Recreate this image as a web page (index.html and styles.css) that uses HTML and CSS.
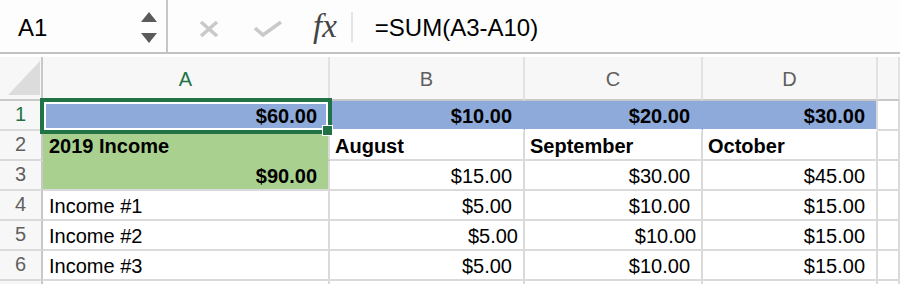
FILE: index.html
```html
<!DOCTYPE html>
<html lang="en">
<head>
    <meta charset="UTF-8">
    <title>Sheet</title>
    <link rel="stylesheet" href="styles.css">
</head>
<body>
    <div class="formula-bar">
        <div class="name-box">
            <span class="cell-ref">A1</span>
            <span class="spinner">
                <svg width="16" height="10" viewBox="0 0 16 10"><polygon points="8,0 16,10 0,10" fill="#5a5a5a"/></svg>
                <svg width="16" height="10" viewBox="0 0 16 10"><polygon points="0,0 16,0 8,10" fill="#5a5a5a"/></svg>
            </span>
        </div>
        <div class="tools">
            <svg class="icon-cancel" width="22" height="16" viewBox="0 0 22 16">
                <line x1="3" y1="1" x2="19" y2="15" stroke="#c9c9c9" stroke-width="3.5"/>
                <line x1="19" y1="1" x2="3" y2="15" stroke="#c9c9c9" stroke-width="3.5"/>
            </svg>
            <svg class="icon-enter" width="30" height="16" viewBox="0 0 30 16">
                <polyline points="2,7 10,14 28,1" fill="none" stroke="#c9c9c9" stroke-width="3.5"/>
            </svg>
            <span class="fx">fx</span>
            <span class="divider"></span>
        </div>
        <div class="formula-input">=SUM(A3-A10)</div>
    </div>

    <div class="sheet">
        <div class="corner"></div>
        <div class="col-hdr active">A</div>
        <div class="col-hdr">B</div>
        <div class="col-hdr">C</div>
        <div class="col-hdr">D</div>
        <div class="col-hdr"></div>

        <div class="row-hdr active">1</div>
        <div class="cell num bold blue">$60.00</div>
        <div class="cell num bold blue">$10.00</div>
        <div class="cell num bold blue">$20.00</div>
        <div class="cell num bold blue last">$30.00</div>
        <div class="cell"></div>

        <div class="row-hdr">2</div>
        <div class="cell bold green green-top">2019 Income</div>
        <div class="cell bold">August</div>
        <div class="cell bold">September</div>
        <div class="cell bold">October</div>
        <div class="cell"></div>

        <div class="row-hdr">3</div>
        <div class="cell num bold green">$90.00</div>
        <div class="cell num">$15.00</div>
        <div class="cell num">$30.00</div>
        <div class="cell num">$45.00</div>
        <div class="cell"></div>

        <div class="row-hdr">4</div>
        <div class="cell">Income #1</div>
        <div class="cell num">$5.00</div>
        <div class="cell num">$10.00</div>
        <div class="cell num">$15.00</div>
        <div class="cell"></div>

        <div class="row-hdr">5</div>
        <div class="cell">Income #2</div>
        <div class="cell num shift">$5.00</div>
        <div class="cell num shift">$10.00</div>
        <div class="cell num">$15.00</div>
        <div class="cell"></div>

        <div class="row-hdr">6</div>
        <div class="cell">Income #3</div>
        <div class="cell num">$5.00</div>
        <div class="cell num">$10.00</div>
        <div class="cell num">$15.00</div>
        <div class="cell"></div>

        <div class="row-hdr stub"></div>
        <div class="cell stub"></div>
        <div class="cell stub"></div>
        <div class="cell stub"></div>
        <div class="cell stub"></div>
        <div class="cell stub"></div>

        <div class="selection"><span class="handle"></span></div>
    </div>
</body>
</html>
```

FILE: styles.css
```css
body {
    margin: 0;
    width: 900px;
    height: 284px;
    overflow: hidden;
    font-family: "Liberation Sans", Arial, sans-serif;
    color: #000;
    background-color: #fff;
}
.formula-bar {
    display: flex;
    height: 52px;
    border-bottom: 2px solid #c2c2c2;
    background: #fdfdfd;
}
.name-box {
    box-sizing: border-box;
    width: 168px;
    padding: 0 9px 0 18px;
    border-right: 2px solid #c6c6c6;
    display: flex;
    align-items: center;
    justify-content: space-between;
}
.cell-ref {
    font-size: 24px;
    margin-top: 4px;
}
.spinner {
    display: flex;
    flex-direction: column;
    gap: 11px;
    margin-top: 2px;
}
.spinner svg {
    display: block;
}
.tools {
    display: flex;
    align-items: center;
    padding-left: 30px;
}
.icon-cancel {
    margin-top: 6px;
}
.icon-enter {
    margin-left: 33px;
    margin-top: 6px;
}
.fx {
    margin-left: 30px;
    font-family: "Liberation Serif", serif;
    font-style: italic;
    font-size: 33px;
    color: #444;
    margin-top: 1px;
}
.divider {
    width: 2px;
    height: 30px;
    margin-left: 14px;
    margin-top: 2px;
    background: #e4e4e4;
}
.formula-input {
    display: flex;
    align-items: center;
    padding-left: 22px;
    font-size: 24px;
    margin-top: 3px;
}
.sheet {
    position: relative;
    margin-top: 3px;
    display: grid;
    grid-template-columns: 43px 287px 195px 178px 175px 1fr;
    grid-template-rows: 44px repeat(6, 30px) 3px;
}
.corner {
    position: relative;
    background: #f7f7f7;
    border-right: 2px solid #c8c8c8;
    border-bottom: 2px solid #c8c8c8;
}
.corner::after {
    content: "";
    position: absolute;
    left: 8px;
    top: 4px;
    width: 32px;
    height: 34px;
    background: #dcdcdc;
    clip-path: polygon(100% 0, 100% 100%, 0 100%);
}
.col-hdr {
    box-sizing: border-box;
    background: #f7f7f7;
    border-right: 2px solid #e2e2e2;
    border-bottom: 2px solid #c8c8c8;
    display: flex;
    align-items: center;
    justify-content: center;
    font-size: 20px;
    color: #5f5f5f;
    padding-top: 2px;
}
.row-hdr {
    box-sizing: border-box;
    background: #f7f7f7;
    border-right: 2px solid #c8c8c8;
    border-bottom: 2px solid #dadada;
    display: flex;
    align-items: flex-end;
    justify-content: center;
    padding-bottom: 3px;
    font-size: 20px;
    color: #5f5f5f;
}
.col-hdr.active,
.row-hdr.active {
    color: #217346;
}
.cell {
    box-sizing: border-box;
    border-right: 2px solid #dadada;
    border-bottom: 2px solid #dadada;
    display: flex;
    align-items: flex-end;
    padding: 0 6px 3px 5px;
    font-size: 20px;
    line-height: 1;
    white-space: nowrap;
}
.stub {
    border-bottom: none;
    padding: 0;
}
.num {
    justify-content: flex-end;
    padding-right: 11px;
}
.num.shift {
    padding-right: 5px;
}
.bold {
    font-weight: bold;
}
.blue {
    background: #8eaadb;
    border-right-color: #8eaadb;
    border-bottom-color: #fff;
}
.blue.last {
    border-right-color: #dadada;
}
.green {
    background: #a9d08e;
    border-right-color: #dadada;
}
.green-top {
    border-bottom-color: #a9d08e;
}
.sheet > .cell:nth-child(6n + 2) {
    padding-left: 6px;
}
.selection {
    position: absolute;
    left: 40px;
    top: 41px;
    width: 292px;
    height: 36px;
    box-sizing: border-box;
    border: 4px solid #217346;
    box-shadow: inset 0 0 0 2px #fff;
}
.handle {
    position: absolute;
    left: 278px;
    top: 23px;
    width: 9px;
    height: 9px;
    background: #217346;
    border: 1px solid #fff;
}
```
